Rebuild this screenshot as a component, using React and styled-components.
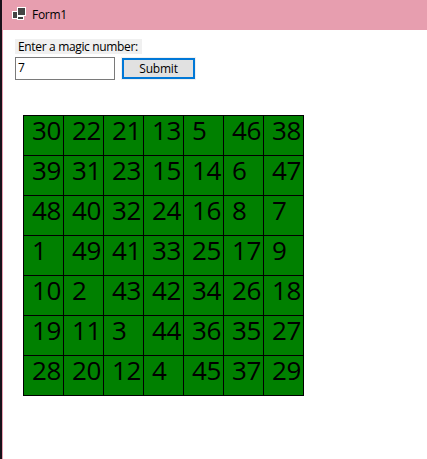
import React from "react";
import styled, { createGlobalStyle } from "styled-components";

const GlobalStyle = createGlobalStyle`
  * { box-sizing: border-box; }
  body { margin: 0; overflow: hidden; background: #fff; }
`;

const Desktop = styled.div`
  width: 427px;
  height: 459px;
  padding-left: 2px;
  background: #16121a;
  font-family: "Open Sans", "Noto Sans", sans-serif;
  font-size: 12px;
  color: #000;
`;

const Window = styled.div`
  height: 100%;
  display: flex;
  flex-direction: column;
  border-left: 1px solid #e79eaf;
  background: #fff;
`;

const TitleBar = styled.header`
  flex: none;
  height: 30px;
  display: flex;
  align-items: center;
  gap: 5px;
  margin-left: -1px;
  padding-left: 10px;
  background: #e79eaf;
`;

const Title = styled.span`
  line-height: 16px;
  letter-spacing: -0.3px;
`;

const Client = styled.main`
  padding: 9px 0 0 12px;
`;

const Label = styled.label`
  display: block;
  width: 127px;
  height: 15px;
  padding-left: 3px;
  line-height: 16px;
  letter-spacing: -0.34px;
  white-space: nowrap;
  background: #f0f0f0;
`;

const Controls = styled.div`
  display: flex;
  align-items: flex-start;
  gap: 6px;
  margin-top: 3px;
`;

const NumberInput = styled.input`
  width: 100px;
  height: 23px;
  padding: 0 2px 2px;
  border: 1px solid #7a7a7a;
  border-radius: 0;
  outline: none;
  background: #fff;
  color: #000;
  font: inherit;
`;

const SubmitButton = styled.button`
  width: 75px;
  height: 23px;
  padding: 1px 0 0;
  border: 1px solid #f0f0f0;
  background: #e1e1e1;
  box-shadow: inset 0 0 0 2px #0078d7;
  color: #000;
  font: inherit;
  line-height: 18px;
  letter-spacing: -0.2px;
`;

const Board = styled.section`
  display: grid;
  grid-template-columns: repeat(7, 40px);
  grid-auto-rows: 40px;
  width: 281px;
  margin: 35px 0 0 8px;
  border: solid #000;
  border-width: 1px 0 0 1px;
`;

const Cell = styled.div`
  padding-left: 8px;
  border: solid #000;
  border-width: 0 1px 1px 0;
  background: #008000;
  font-size: 26px;
  line-height: 28px;
  letter-spacing: -0.4px;
  white-space: nowrap;
`;

const square = [
  [30, 22, 21, 13, 5, 46, 38],
  [39, 31, 23, 15, 14, 6, 47],
  [48, 40, 32, 24, 16, 8, 7],
  [1, 49, 41, 33, 25, 17, 9],
  [10, 2, 43, 42, 34, 26, 18],
  [19, 11, 3, 44, 36, 35, 27],
  [28, 20, 12, 4, 45, 37, 29],
];

function FormIcon() {
  return (
    <svg width="15" height="16" viewBox="0 0 15 16" shapeRendering="crispEdges">
      <path fill="#fff" d="M0 4h5V0h9v9h-2v4H5v-1H0z" />
      <path fill="#444" d="M1 5h4v6H1zM6 1h7v7H6zM6 10h5v2H6z" />
    </svg>
  );
}

export default function App() {
  return (
    <Desktop>
      <GlobalStyle />
      <Window>
        <TitleBar>
          <FormIcon />
          <Title>Form1</Title>
        </TitleBar>
        <Client>
          <Label htmlFor="magic">Enter a magic number:</Label>
          <Controls>
            <NumberInput id="magic" defaultValue="7" />
            <SubmitButton>Submit</SubmitButton>
          </Controls>
          <Board>
            {square.flat().map((n) => (
              <Cell key={n}>{n}</Cell>
            ))}
          </Board>
        </Client>
      </Window>
    </Desktop>
  );
}
